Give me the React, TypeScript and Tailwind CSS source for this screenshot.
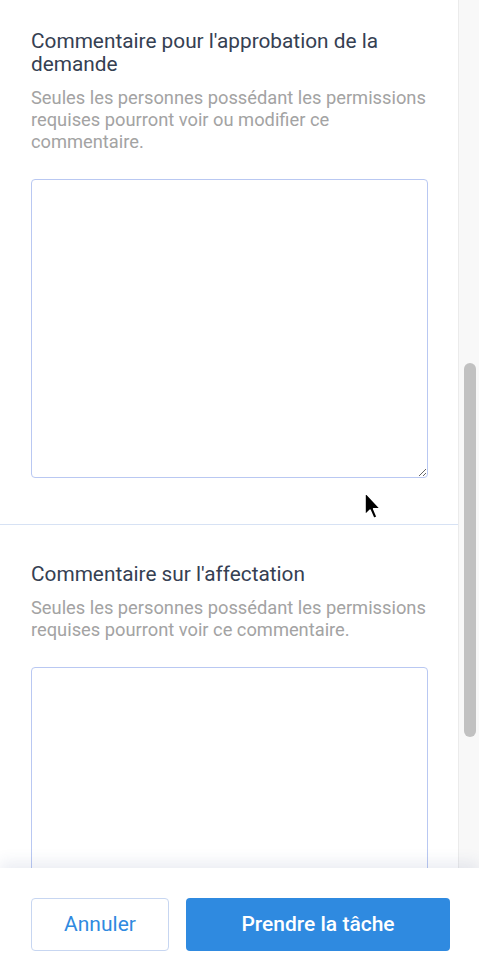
import React from 'react';

function CommentSection({
  title,
  hint,
  first,
}: {
  title: string;
  hint: string;
  first?: boolean;
}) {
  return (
    <section className={first ? 'px-[31px] pt-[30px] pb-[46px]' : 'px-[31px] pt-[38px]'}>
      <h3 className="text-[20.8px] leading-[23px] text-[#354052] pr-[20px]">{title}</h3>
      <p className="mt-[11px] text-[18.3px] leading-[22px] text-[#a3a3a3]">{hint}</p>
      <textarea
        className="mt-[26px] block w-[397px] h-[299px] rounded-[4px] border border-[#b9c8f2] bg-white outline-none"
        defaultValue=""
      />
    </section>
  );
}

function Cursor() {
  return (
    <svg
      className="absolute left-[362px] top-[491px] z-20"
      width="22"
      height="32"
      viewBox="0 0 18 28"
    >
      <path
        d="M2 1 L2 21 L6.5 16.8 L9.6 24 L12.6 22.7 L9.6 15.6 L15.5 15.6 Z"
        fill="#000"
        stroke="#fff"
        strokeWidth="1.4"
        strokeLinejoin="round"
      />
    </svg>
  );
}

export default function App() {
  return (
    <div
      className="relative h-[978px] w-[479px] overflow-hidden bg-white flex flex-col"
      style={{ fontFamily: 'Roboto, "Noto Sans", sans-serif' }}
    >
      <div className="flex flex-1 min-h-0">
        <main className="w-[458px] overflow-hidden">
          <CommentSection
            first
            title="Commentaire pour l'approbation de la demande"
            hint="Seules les personnes possédant les permissions requises pourront voir ou modifier ce commentaire."
          />
          <div className="h-px bg-[#d7e2f4]" />
          <CommentSection
            title="Commentaire sur l'affectation"
            hint="Seules les personnes possédant les permissions requises pourront voir ce commentaire."
          />
        </main>
        <aside className="w-[21px] bg-[#f8f8f8] border-l border-[#ebebeb] pl-[5px] pt-[363px]">
          <div className="w-[12px] h-[374px] rounded-full bg-[#c1c1c1]" />
        </aside>
      </div>

      <footer className="relative z-10 h-[110px] bg-white shadow-[0_-6px_14px_rgba(60,80,140,0.10)] flex gap-[17px] pl-[31px] pt-[30px]">
        <button className="shrink-0 w-[138px] h-[53px] rounded-[4px] border border-[#c7d6f1] bg-white text-[21px] text-[#2f8ae0]">
          Annuler
        </button>
        <button className="shrink-0 w-[264px] h-[53px] rounded-[4px] bg-[#2f8ae0] text-[21px] font-medium text-white">
          Prendre la tâche
        </button>
      </footer>

      <Cursor />
    </div>
  );
}
